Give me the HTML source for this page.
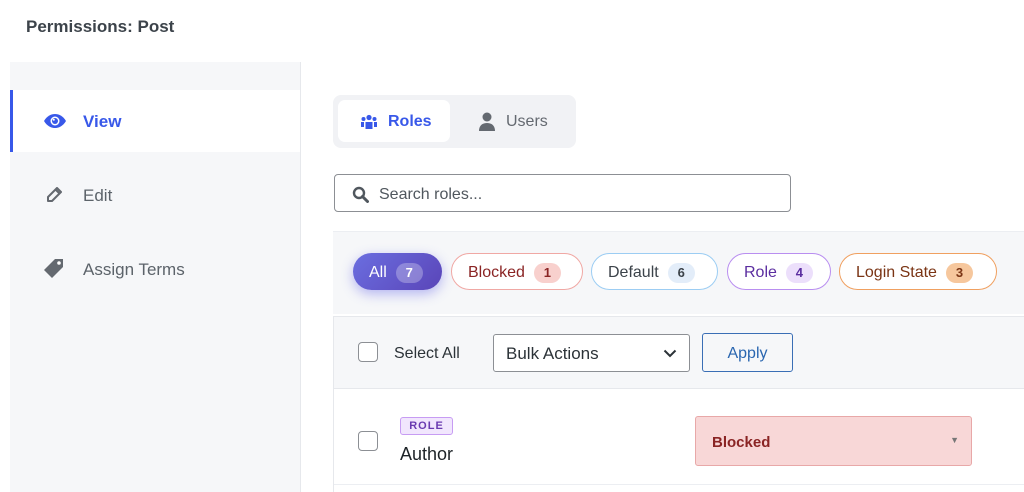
<!DOCTYPE html>
<html><head><meta charset="utf-8"><style>
*{box-sizing:border-box;margin:0;padding:0}
body{width:1024px;height:492px;overflow:hidden;background:#fff;font-family:"Liberation Sans",sans-serif;position:relative;color:#1d2327}
.a{position:absolute}
.title{left:26px;top:17px;font-size:17px;font-weight:bold;color:#3c434a}
.side{left:10px;top:62px;width:291px;height:430px;background:#f6f7f9;border-right:1px solid #e6e8ec}
.nav{position:absolute;left:0;width:290px;height:62px;display:flex;align-items:center;font-size:17px;color:#5c636a}
.nav svg{position:absolute;left:33px}
.nav span{position:absolute;left:73px;top:22px}
.nav.on{background:#fff;color:#3858e9;font-weight:bold;border-left:3px solid #3858e9}
.pill{position:absolute;top:253px;height:37px;border-radius:19px;border:1.5px solid;background:#fff;display:flex;align-items:center;font-size:16px;padding-left:16px;padding-top:2px}
.cnt{display:inline-block;margin-left:9px;min-width:27px;height:20px;border-radius:10px;font-size:13px;font-weight:bold;text-align:center;line-height:20px}
.cb{position:absolute;width:20px;height:20px;border:1.5px solid #8c8f94;border-radius:4px;background:#fff}
</style></head><body>
<div class="a title">Permissions: Post</div>
<div class="a side">
 <div class="nav on" style="top:28px"><svg width="24" height="16" viewBox="0 0 24 16" style="left:30px"><path d="M1 8C4 3 8 1 12 1s8 2 11 7c-3 5-7 7-11 7S4 13 1 8z" fill="#3858e9"/><circle cx="12" cy="8" r="4.5" fill="#fff"/><circle cx="12" cy="8" r="3" fill="#3858e9"/><circle cx="10.8" cy="6.8" r="1" fill="#fff"/></svg><span style="left:70px">View</span></div>
 <div class="nav" style="top:102px"><svg width="16" height="16" viewBox="0 0 16 16" style="left:36px"><path d="M11 1l4 4-9 9H2v-4z M10 3l3 3" fill="none" stroke="#646970" stroke-width="2" stroke-linejoin="round"/></svg><span>Edit</span></div>
 <div class="nav" style="top:176px"><svg width="22" height="22" viewBox="0 0 22 22" style="left:33px"><path d="M12 1h8v8L9 20 1 12z" fill="#646970"/><circle cx="16" cy="5" r="1.8" fill="#fff"/></svg><span>Assign Terms</span></div>
</div>

<div class="a" style="left:333px;top:95px;width:243px;height:53px;background:#f1f2f5;border-radius:8px"></div>
<div class="a" style="left:338px;top:100px;width:112px;height:42px;background:#fff;border-radius:7px;display:flex;align-items:center;font-size:16px;color:#3858e9;font-weight:bold;padding-top:2px">
 <svg width="18" height="16" viewBox="0 0 18 16" style="margin-left:22px;margin-right:10px"><circle cx="9" cy="3.5" r="2.6" fill="#3858e9"/><circle cx="3.5" cy="5" r="2" fill="#3858e9"/><circle cx="14.5" cy="5" r="2" fill="#3858e9"/><path d="M5.5 8h7v7h-7z" fill="#3858e9"/><path d="M1 8h3v5H1zM14 8h3v5h-3z" fill="#3858e9"/></svg>Roles</div>
<div class="a" style="left:478px;top:112px;font-size:16px;color:#646970;display:flex;align-items:center">
 <svg width="18" height="20" viewBox="0 0 18 20" style="margin-right:10px"><circle cx="9" cy="5" r="4.5" fill="#646970"/><path d="M1 19c0-5 3-8 8-8s8 3 8 8z" fill="#646970"/></svg>Users</div>

<div class="a" style="left:334px;top:174px;width:457px;height:38px;border:1.5px solid #8c8f94;border-radius:4px;display:flex;align-items:center;font-size:16px;color:#50575e;padding-top:3px">
 <svg width="17" height="17" viewBox="0 0 17 17" style="margin-left:17px;margin-right:10px"><circle cx="7" cy="7" r="5" fill="none" stroke="#50575e" stroke-width="2.4"/><path d="M10.5 10.5L15.5 15.5" stroke="#50575e" stroke-width="3" stroke-linecap="round"/></svg>Search roles...</div>

<div class="a" style="left:333px;top:231px;width:691px;height:83px;background:#f6f7f9;border-top:1px solid #eceef2"></div>
<div class="pill" style="left:353px;width:89px;border:none;background:linear-gradient(135deg,#6b6ee0,#5a45b8);color:#fff;box-shadow:0 4px 12px rgba(100,100,230,.45)">All<span class="cnt" style="background:rgba(255,255,255,.28);color:#fff">7</span></div>
<div class="pill" style="left:451px;width:132px;border-color:#f0a8a4;color:#8a2424">Blocked<span class="cnt" style="background:#f8d0cd;color:#8a2424">1</span></div>
<div class="pill" style="left:591px;width:127px;border-color:#9ccdf3;color:#3c434a">Default<span class="cnt" style="background:#e3edf9;color:#3c434a">6</span></div>
<div class="pill" style="left:727px;width:104px;border-color:#b98ef0;color:#5b2ea0">Role<span class="cnt" style="background:#ecdffb;color:#5b2ea0">4</span></div>
<div class="pill" style="left:839px;width:158px;border-color:#f0a060;color:#7a3414">Login State<span class="cnt" style="background:#f6c79d;color:#7a3414">3</span></div>

<div class="a" style="left:333px;top:316px;width:691px;height:176px;border-left:1px solid #e6e8ec;border-top:1px solid #e6e8ec"></div>
<div class="a" style="left:334px;top:317px;width:690px;height:72px;background:#f6f7f9;border-bottom:1px solid #e6e8ec"></div>
<div class="cb" style="left:358px;top:342px"></div>
<div class="a" style="left:394px;top:345px;font-size:16px;color:#2c3338">Select All</div>
<div class="a" style="left:493px;top:334px;width:197px;height:38px;border:1px solid #8c8f94;border-radius:3px;background:#fff;font-size:17px;padding:9px 0 0 12px;color:#2c3338">Bulk Actions
 <svg width="14" height="9" viewBox="0 0 14 9" style="position:absolute;right:12px;top:14px"><path d="M1.5 1.5L7 7l5.5-5.5" fill="none" stroke="#2c3338" stroke-width="2"/></svg></div>
<div class="a" style="left:702px;top:333px;width:91px;height:39px;border:1.5px solid #3a6eb5;border-radius:3px;background:#f6f7f9;color:#2a66b0;font-size:16px;text-align:center;line-height:39px">Apply</div>

<div class="cb" style="left:358px;top:431px"></div>
<div class="a" style="left:400px;top:417px;width:53px;height:18px;background:#f1e6fd;border:1px solid #c79cf3;border-radius:3px;color:#6a3bb0;font-size:11px;font-weight:bold;text-align:center;line-height:16px;letter-spacing:1px">ROLE</div>
<div class="a" style="left:400px;top:444px;font-size:18px;color:#1d2327">Author</div>
<div class="a" style="left:695px;top:416px;width:277px;height:50px;background:#f8d7d7;border:1px solid #e8a8a8;border-radius:3px;color:#8a2424;font-weight:bold;font-size:15px;padding:17px 0 0 16px">Blocked<span style="position:absolute;right:12px;top:18px;font-size:9px;color:#777">▼</span></div>
<div class="a" style="left:334px;top:484px;width:690px;height:1px;background:#eceef2"></div>
</body></html>
